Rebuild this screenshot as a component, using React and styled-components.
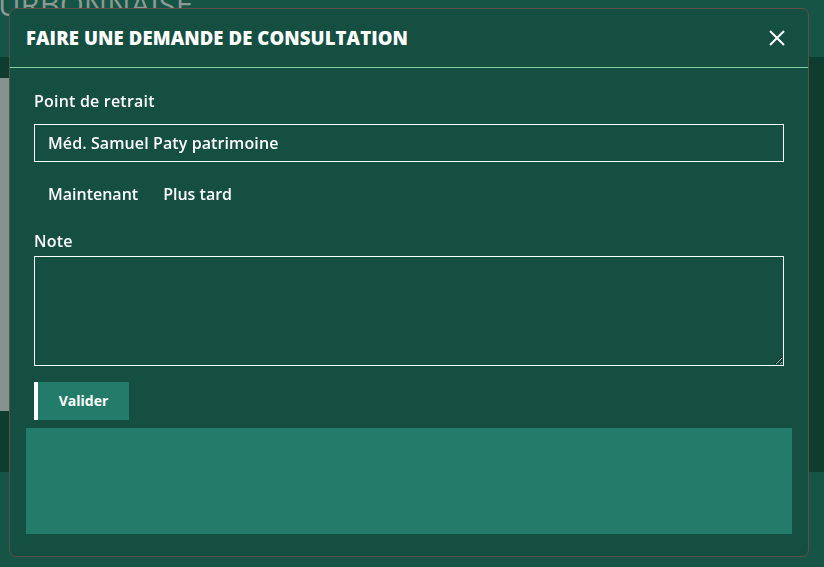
import React from "react";
import styled, { createGlobalStyle } from "styled-components";

const Global = createGlobalStyle`
  html, body { margin: 0; padding: 0; }
  body {
    background: #165445;
    font-family: "Open Sans", "Liberation Sans", sans-serif;
    overflow: hidden;
    width: 824px;
    height: 567px;
  }
  * { box-sizing: border-box; }
`;

const Page = styled.div`
  width: 824px;
  height: 567px;
  display: flex;
  flex-direction: column;
  background: #165445;
  overflow: hidden;
`;

const TopBar = styled.header`
  height: 57px;
  overflow: hidden;
  background: #165445;
`;

const SiteName = styled.div`
  margin: -11px 0 0 -2px;
  font-family: "Open Sans", sans-serif;
  font-size: 31px;
  line-height: 31px;
  font-weight: 400;
  color: #8d9994;
  white-space: nowrap;
`;

const Main = styled.main`
  height: 415px;
  background: #0e3d30;
  display: flex;
  padding-top: 21px;
`;

const SideStrip = styled.aside`
  width: 9px;
  height: 333px;
  background: #86928d;
`;

const Overlay = styled.div`
  position: fixed;
  inset: 0;
`;

const Modal = styled.div`
  position: absolute;
  left: 9px;
  top: 8px;
  width: 800px;
  height: 549px;
  background: #154f42;
  border: 1px solid #5e5048;
  border-radius: 7px;
  display: flex;
  flex-direction: column;
  color: #ffffff;
`;

const ModalHeader = styled.div`
  height: 59px;
  display: flex;
  align-items: center;
  justify-content: space-between;
  padding: 0 23px 1px 16px;
  border-bottom: 1px solid #7fd3a0;
`;

const Title = styled.h2`
  margin: 0;
  font-family: "Open Sans", sans-serif;
  font-weight: 800;
  font-size: 18.5px;
  letter-spacing: 0.1px;
  color: #ffffff;
  text-transform: uppercase;
`;

const CloseButton = styled.button`
  width: 16px;
  height: 16px;
  padding: 0;
  border: 0;
  background: transparent;
  cursor: pointer;
  display: flex;
`;

const Body = styled.div`
  padding: 22px 24px 0;
  display: flex;
  flex-direction: column;
`;

const Label = styled.label`
  font-size: 16px;
  font-weight: 600;
  line-height: 22px;
  letter-spacing: 0.2px;
  color: #ffffff;
  margin-bottom: ${(p) => p.$mb || 0}px;
`;

const TextInput = styled.div`
  height: 38px;
  border: 1px solid #ffffff;
  padding: 0 13px;
  display: flex;
  align-items: center;
  font-size: 16px;
  font-weight: 600;
  letter-spacing: 0.1px;
`;

const Choices = styled.div`
  display: flex;
  gap: 25px;
  padding: 21px 14px 0;
  height: 68px;
`;

const Choice = styled.span`
  font-size: 16px;
  font-weight: 600;
  line-height: 22px;
`;

const TextArea = styled.textarea`
  height: 110px;
  width: 100%;
  background: transparent;
  border: 1px solid #ffffff;
  border-radius: 0;
  color: #fff;
  resize: vertical;
  font-family: inherit;
  margin: 4px 0 0;
  display: block;
`;

const SubmitButton = styled.button`
  align-self: flex-start;
  margin-top: 16px;
  width: 95px;
  height: 38px;
  background: #237c69;
  border: 0;
  border-left: 4px solid #ffffff;
  color: #ffffff;
  font-family: "Open Sans", sans-serif;
  font-weight: 700;
  font-size: 14px;
  padding: 0 0 2px;
`;

const InfoBlock = styled.div`
  margin: 8px 16px 0;
  height: 106px;
  background: #237c69;
`;

export default function App() {
  return (
    <>
      <Global />
      <Page>
        <TopBar>
          <SiteName>URBONNAISE</SiteName>
        </TopBar>
        <Main>
          <SideStrip />
        </Main>
      </Page>
      <Overlay>
        <Modal>
          <ModalHeader>
            <Title>Faire une demande de consultation</Title>
            <CloseButton aria-label="Fermer">
              <svg width="16" height="16" viewBox="0 0 16 16">
                <path d="M1 1 L15 15 M15 1 L1 15" stroke="#fff" strokeWidth="2" />
              </svg>
            </CloseButton>
          </ModalHeader>
          <Body>
            <Label $mb={12}>Point de retrait</Label>
            <TextInput>Méd. Samuel Paty patrimoine</TextInput>
            <Choices>
              <Choice>Maintenant</Choice>
              <Choice>Plus tard</Choice>
            </Choices>
            <Label>Note</Label>
            <TextArea />
            <SubmitButton>Valider</SubmitButton>
          </Body>
          <InfoBlock />
        </Modal>
      </Overlay>
    </>
  );
}
